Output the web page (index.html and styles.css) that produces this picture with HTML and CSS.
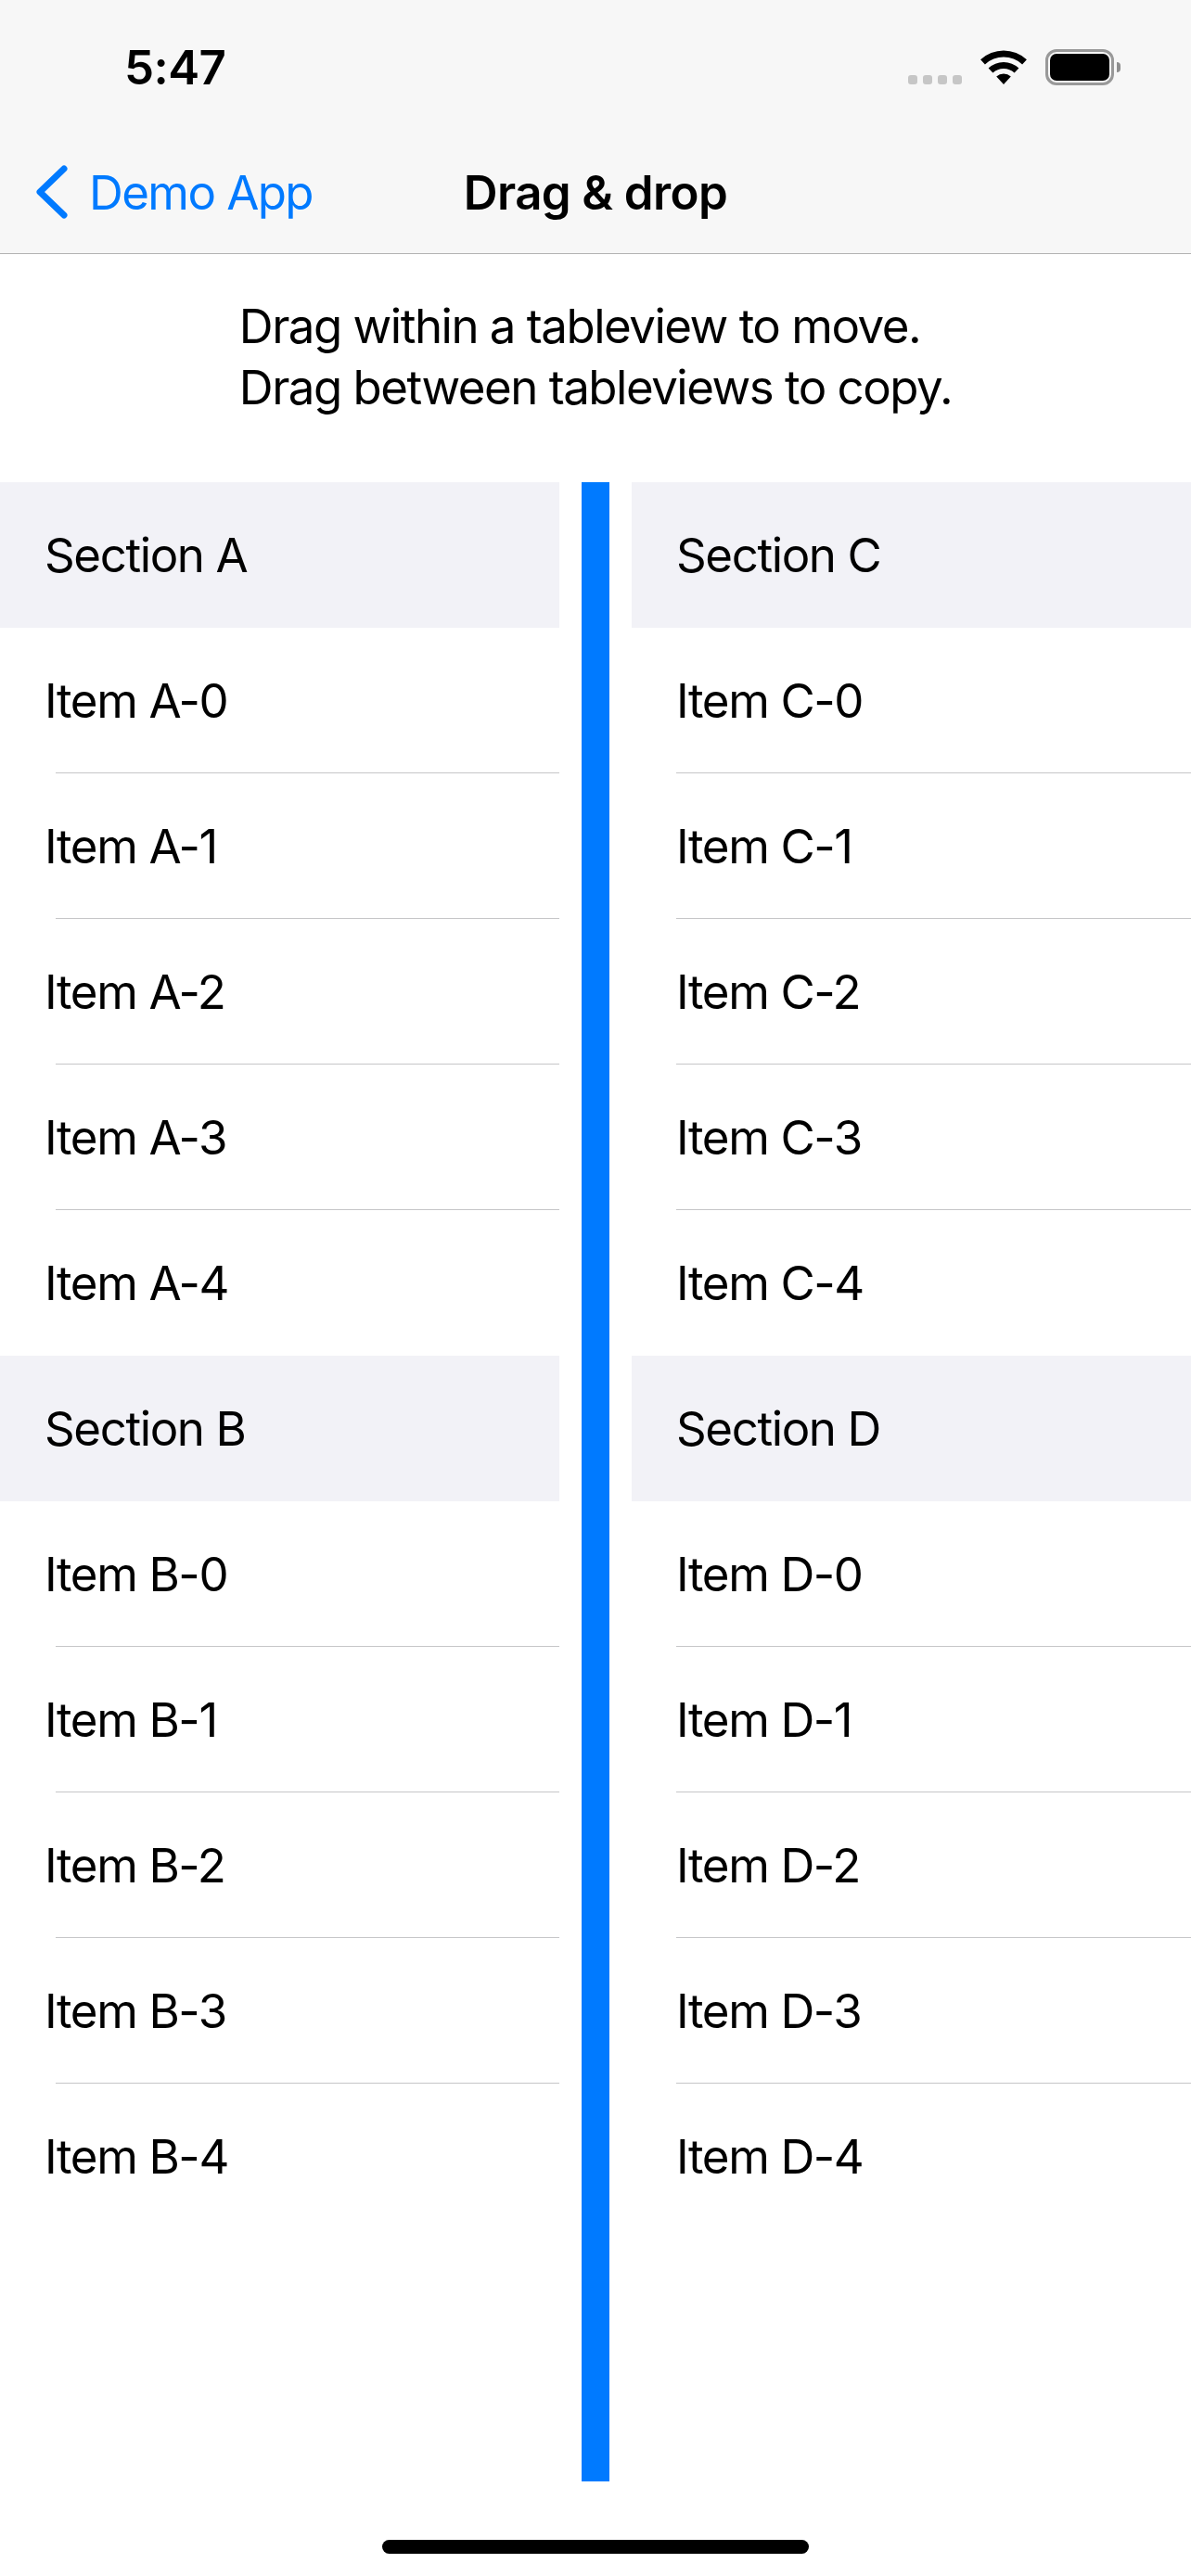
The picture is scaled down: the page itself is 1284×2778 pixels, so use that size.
FILE: index.html
```html
<!DOCTYPE html>
<html>
<head>
  <title>Drag &amp; drop</title>
  <link rel="stylesheet" href="styles.css">
</head>
<body>
  <div class="top-bar">
    <div class="status-bar">
      <span class="time">5:47</span>
      <div class="status-icons">
        <div class="signal"><i></i><i></i><i></i><i></i></div>
        <svg class="wifi" width="50" height="37" viewBox="0 0 50 37">
          <path d="M0.1 10.3A36.5 36.5 0 0 1 49.9 10.3L45.1 15.4A29.5 29.5 0 0 0 4.9 15.4Z"/>
          <path d="M8.6 19.5A24 24 0 0 1 41.4 19.5L36.6 24.6A17 17 0 0 0 13.4 24.6Z"/>
          <path d="M17.2 28.6A11.5 11.5 0 0 1 32.8 28.6L25 37Z"/>
        </svg>
        <div class="battery"><div class="battery-fill"></div></div>
        <div class="battery-nub"></div>
      </div>
    </div>
    <div class="nav-bar">
      <a class="back">
        <svg width="36" height="58" viewBox="0 0 36 58">
          <path d="M31 4L5 29L31 54" fill="none" stroke="#007aff" stroke-width="7" stroke-linecap="round" stroke-linejoin="round"/>
        </svg>
        <span>Demo App</span>
      </a>
      <div class="nav-title">Drag &amp; drop</div>
    </div>
  </div>

  <div class="intro">
    <p>Drag within a tableview to move.<br>Drag between tableviews to copy.</p>
  </div>

  <div class="tables">
    <div class="table table-left">
      <div class="section">
        <div class="section-header">Section A</div>
        <div class="row">Item A-0</div><div class="rule"></div>
        <div class="row">Item A-1</div><div class="rule"></div>
        <div class="row">Item A-2</div><div class="rule"></div>
        <div class="row">Item A-3</div><div class="rule"></div>
        <div class="row">Item A-4</div>
      </div>
      <div class="section">
        <div class="section-header">Section B</div>
        <div class="row">Item B-0</div><div class="rule"></div>
        <div class="row">Item B-1</div><div class="rule"></div>
        <div class="row">Item B-2</div><div class="rule"></div>
        <div class="row">Item B-3</div><div class="rule"></div>
        <div class="row">Item B-4</div>
      </div>
    </div>

    <div class="divider"></div>

    <div class="table table-right">
      <div class="section">
        <div class="section-header">Section C</div>
        <div class="row">Item C-0</div><div class="rule"></div>
        <div class="row">Item C-1</div><div class="rule"></div>
        <div class="row">Item C-2</div><div class="rule"></div>
        <div class="row">Item C-3</div><div class="rule"></div>
        <div class="row">Item C-4</div>
      </div>
      <div class="section">
        <div class="section-header">Section D</div>
        <div class="row">Item D-0</div><div class="rule"></div>
        <div class="row">Item D-1</div><div class="rule"></div>
        <div class="row">Item D-2</div><div class="rule"></div>
        <div class="row">Item D-3</div><div class="rule"></div>
        <div class="row">Item D-4</div>
      </div>
    </div>
  </div>

  <div class="home-area">
    <div class="home-indicator"></div>
  </div>
</body>
</html>
```

FILE: styles.css
```css
* {
  box-sizing: border-box;
}

body {
  margin: 0;
  width: 1284px;
  height: 2778px;
  overflow: hidden;
  background-color: #fff;
  color: #000;
  font-family: Inter, "Liberation Sans", sans-serif;
  font-size: 51px;
  letter-spacing: -1.4px;
}

.top-bar {
  background-color: #f7f7f7;
  border-bottom: 1px solid #b2b2b2;
}

.status-bar {
  height: 141px;
  display: flex;
  justify-content: space-between;
  padding: 53px 76px 0 134px;
}

.time {
  font-size: 51px;
  font-weight: 600;
  line-height: 39px;
  letter-spacing: -0.6px;
}

.status-icons {
  display: flex;
  height: 39px;
}

.signal {
  display: flex;
  gap: 6px;
  margin: 28px 20px 0 0;
}

.signal i {
  width: 10px;
  height: 10px;
  border-radius: 3px;
  background-color: #c6c6c6;
}

.wifi {
  margin: 1px 20px 0 0;
}

.battery {
  width: 74px;
  height: 39px;
  padding: 2px;
  border: 3px solid #999;
  border-radius: 12px;
}

.battery-fill {
  height: 100%;
  background-color: #000;
  border-radius: 7px;
}

.battery-nub {
  width: 4px;
  height: 11px;
  margin: 14px 0 0 3px;
  background-color: #8e8e8e;
  border-radius: 0 4px 4px 0;
}

.nav-bar {
  height: 132px;
  display: grid;
  grid-template-columns: 1fr auto 1fr;
  align-items: center;
}

.back {
  display: flex;
  align-items: center;
  gap: 22px;
  padding-left: 38px;
  color: #007aff;
  letter-spacing: -1.6px;
}

.nav-title {
  font-weight: 600;
  letter-spacing: -0.6px;
}

.intro {
  height: 246px;
  display: flex;
  justify-content: center;
  padding-top: 45px;
}

.intro p {
  margin: 0;
  line-height: 66px;
  letter-spacing: -1.5px;
}

.tables {
  height: 2156px;
  display: flex;
  gap: 24px;
}

.table {
  width: 603px;
}

.table-left {
  --rule-inset: 60px;
}

.table-right {
  --rule-inset: 48px;
}

.divider {
  width: 30px;
  background-color: #007aff;
}

.section-header {
  height: 157px;
  display: flex;
  align-items: center;
  padding-left: 48px;
  background-color: #f2f2f7;
}

.row {
  height: 156px;
  display: flex;
  align-items: center;
  padding-left: 48px;
}

.row:last-child {
  height: 157px;
}

.rule {
  height: 1px;
  margin-left: var(--rule-inset);
  background-color: #c6c6c8;
}

.home-area {
  padding-top: 63px;
  display: flex;
  justify-content: center;
}

.home-indicator {
  width: 460px;
  height: 15px;
  border-radius: 8px;
  background-color: #000;
}
```
